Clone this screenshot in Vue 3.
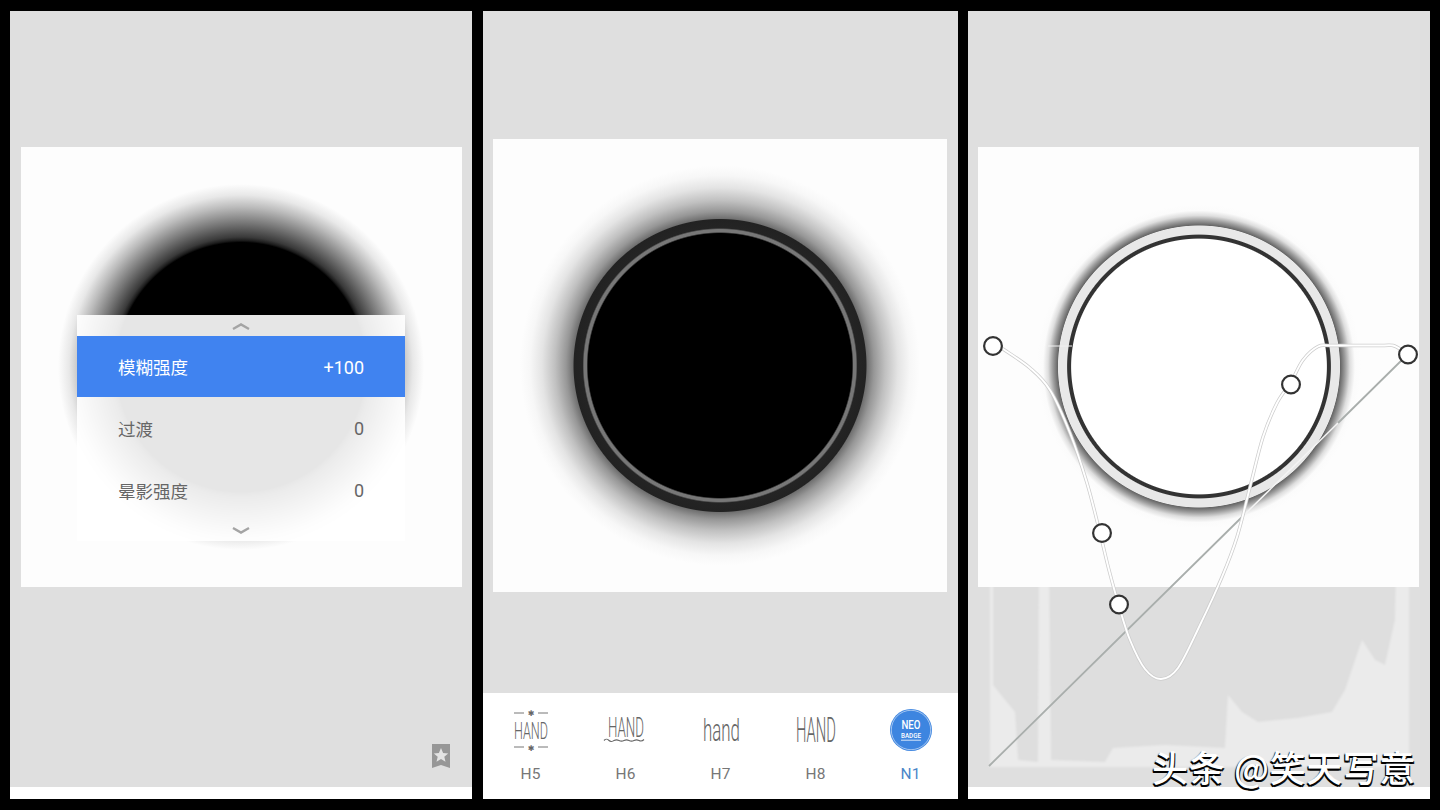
<script setup>
const rows = [
  { name: '模糊强度', value: '+100', active: true },
  { name: '过渡', value: '0' },
  { name: '晕影强度', value: '0' },
]
const nodes = [[993, 346], [1102, 533], [1119, 604.5], [1291, 384.5], [1408, 354.5]]
const pts = [[1003, 349], [1030, 368], [1050, 390], [1070, 433], [1087, 483], [1100, 533], [1109, 570], [1119, 606], [1130, 640], [1145, 669], [1161, 679], [1178, 668], [1200, 625], [1222, 577], [1237, 537], [1250, 487], [1263, 437], [1277, 403], [1291, 382], [1303, 360], [1318, 346.5], [1332, 345.5], [1380, 345.5], [1393, 345.5], [1403, 351]]
const curve = pts.reduce((d, p, i) => {
  if (i === 0) return `M${p[0]} ${p[1]}`
  const a = pts[i - 2] || pts[i - 1], b = pts[i - 1], c = pts[i + 1] || p
  const c1 = [b[0] + (p[0] - a[0]) / 6, b[1] + (p[1] - a[1]) / 6]
  const c2 = [p[0] - (c[0] - b[0]) / 6, p[1] - (c[1] - b[1]) / 6]
  return `${d} C${c1[0]} ${c1[1]} ${c2[0]} ${c2[1]} ${p[0]} ${p[1]}`
}, '')
</script>

<template>
  <div class="screen">
    <section class="panel">
      <div class="stage stage-left">
        <div class="photo photo-blur">
          <div class="menu">
            <div class="chev">
              <svg width="20" height="10" viewBox="0 0 20 10"><path d="M2 8 10 3.5 18 8" /></svg>
            </div>
            <div v-for="r in rows" :key="r.name" class="row" :class="{ active: r.active }">
              <span>{{ r.name }}</span><span class="num">{{ r.value }}</span>
            </div>
            <div class="chev chev-down">
              <svg width="20" height="10" viewBox="0 0 20 10"><path d="M2 2 10 6.5 18 2" /></svg>
            </div>
          </div>
        </div>
        <svg class="bookmark" width="18" height="24" viewBox="0 0 18 24">
          <path d="M0 0H18V24L9 21 0 24Z" fill="#979797" />
          <path d="M9 4 11.1 9 16.2 9.4 12.3 12.7 13.5 17.8 9 15.1 4.5 17.8 5.7 12.7 1.8 9.4 6.9 9Z" fill="#e4e4e4" />
        </svg>
      </div>
      <div class="foot"></div>
    </section>

    <section class="panel panel-mid">
      <div class="stage stage-mid">
        <div class="photo photo-ring"></div>
      </div>
      <div class="tabs">
        <div class="tab">
          <svg class="tab-icon" width="60" height="46" viewBox="0 0 60 46">
            <g stroke="#777" stroke-width="1"><path d="M13 6H23M37 6H47M13 40H23M37 40H47" /></g>
            <text x="30" y="9" class="star">✱</text>
            <text x="30" y="44" class="star">✱</text>
            <text x="13" y="32" class="hand" font-size="24" textLength="34" lengthAdjust="spacingAndGlyphs">HAND</text>
          </svg>
          <span>H5</span>
        </div>
        <div class="tab">
          <svg class="tab-icon" width="60" height="46" viewBox="0 0 60 46">
            <text x="12" y="30" class="hand" font-size="27" textLength="36" lengthAdjust="spacingAndGlyphs">HAND</text>
            <path d="M8 33.5c2-2 3-2 5 0s3 1 5 0 3-1 5 0 3 1 5 0 3-1 5 0 3 1 5 0 3-1 5 0 3 1 5-1" fill="none" stroke="#666" stroke-width="1.1" />
          </svg>
          <span>H6</span>
        </div>
        <div class="tab">
          <svg class="tab-icon" width="60" height="46" viewBox="0 0 60 46">
            <text x="12" y="34" class="hand hand-low" font-size="32" textLength="37" lengthAdjust="spacingAndGlyphs">hand</text>
          </svg>
          <span>H7</span>
        </div>
        <div class="tab">
          <svg class="tab-icon" width="60" height="46" viewBox="0 0 60 46">
            <text x="10" y="35" class="hand" font-size="35" textLength="40" lengthAdjust="spacingAndGlyphs">HAND</text>
          </svg>
          <span>H8</span>
        </div>
        <div class="tab tab-on">
          <svg class="tab-icon" width="60" height="46" viewBox="0 0 60 46">
            <circle cx="30" cy="23" r="21" fill="#3d85e0" />
            <circle cx="30" cy="23" r="19.7" fill="none" stroke="#cfe0f6" stroke-width=".7" />
            <text x="30" y="22" class="neo" textLength="19" lengthAdjust="spacingAndGlyphs">NEO</text>
            <text x="30" y="31" class="badge" textLength="20" lengthAdjust="spacingAndGlyphs">BADGE</text>
            <path d="M20 33.2H40" stroke="#fff" stroke-width=".8" />
          </svg>
          <span>N1</span>
        </div>
      </div>
    </section>

    <section class="panel">
      <div class="stage stage-right">
        <div class="photo photo-white"></div>
      </div>
      <div class="foot"></div>
      <svg class="overlay" width="462" height="788" viewBox="968 11 462 788">
        <defs>
          <filter id="soft" x="-5%" y="-5%" width="110%" height="110%"><feGaussianBlur stdDeviation="1" /></filter>
          <clipPath id="hist"><rect x="985" y="587" width="430" height="190" /></clipPath>
        </defs>
        <g clip-path="url(#hist)">
          <g filter="url(#soft)">
            <rect x="990" y="580" width="419" height="187" fill="#ebebeb" />
            <path d="M993 570H1039L1038 762 1018 760 1015 712 1005 700 993 685Z" fill="#dedede" />
            <path d="M1049 570H1396L1395 620 1385 665 1375 660 1362 640 1345 690 1332 712 1298 718 1258 722 1242 712 1228 695 1225 748 1165 745 1113 748 1105 762 1051 760Z" fill="#dedede" />
          </g>
        </g>
        <path d="M1408 354 1338 423M1243 516 989 766" stroke="#a9aeac" stroke-width="1.8" fill="none" />
        <path d="M1338 423 1243 516" stroke="#f4f4f4" stroke-width="1.5" fill="none" />
        <path d="M1048 346H1072" stroke="#f1f1f1" stroke-width="1" />
        <path :d="curve" fill="none" stroke="#cdcdcd" stroke-width="3.4" stroke-linecap="round" />
        <path :d="curve" fill="none" stroke="#fff" stroke-width="1.9" stroke-linecap="round" />
        <circle v-for="(n, i) in nodes" :key="i" :cx="n[0]" :cy="n[1]" r="8.9" fill="#fff" stroke="#333" stroke-width="2.2" />
      </svg>
      <div class="mark">头条 @笑天写意</div>
    </section>
  </div>
</template>

<style scoped>
.screen {
  display: flex;
  width: 1440px;
  height: 810px;
  box-sizing: border-box;
  padding: 11px 10px;
  background: #000;
  font-family: Roboto, "Noto Sans CJK SC", sans-serif;
  overflow: hidden;
}
.panel {
  position: relative;
  display: flex;
  flex-direction: column;
  width: 462px;
  background: #fff;
}
.panel-mid {
  width: 475px;
  margin: 0 10px 0 11px;
}
.stage {
  position: relative;
  flex: 1;
  box-sizing: border-box;
  padding: 136px 0 0 11px;
  background: #dfdfdf;
}
.stage-mid {
  padding: 128px 0 0 10px;
}
.stage-right {
  padding-left: 10px;
}
.foot {
  height: 12px;
  flex: none;
}
.photo {
  position: relative;
  width: 441px;
  height: 440px;
  background-color: #fdfdfd;
}
.photo-blur {
  background-image: radial-gradient(circle at 220px 220px,
    #000 0 124.5px, #1c1c1c 126.5px, #3a3a3a 130px, #777 144px, #bbb 160px, #e8e8e8 172px, #fdfdfd 183px);
}
.photo-ring {
  width: 454px;
  height: 453px;
  background-image: radial-gradient(circle at 227px 226.5px,
    #000 0 132px, #777 133.5px, #777 136px, #242424 137.5px, #222 146px, #707070 147px, #979797 154px, #c0c0c0 165px, #e4e4e4 178px, #f7f7f7 190px, #fdfdfd 200px);
}
.photo-white {
  background-image: radial-gradient(circle at 221px 219.5px,
    #fff 0 127.4px, #333 128.4px, #333 131.4px, #e8e8e8 132.4px, #e8e8e8 140.6px, #666 141.4px, #9c9c9c 146px, #dedede 151px, #fbfbfb 156px, #fdfdfd 162px);
}
.menu {
  position: absolute;
  top: 168px;
  left: 56px;
  display: flex;
  flex-direction: column;
  width: 328px;
  height: 226px;
  background: rgba(255, 255, 255, 0.9);
}
.chev {
  display: flex;
  align-items: center;
  justify-content: center;
  height: 21px;
}
.chev-down {
  height: 20px;
}
.chev path {
  fill: none;
  stroke: #a4a4a4;
  stroke-width: 2.4;
}
.row {
  display: flex;
  align-items: center;
  justify-content: space-between;
  height: 62px;
  flex: none;
  box-sizing: border-box;
  padding: 0 41px;
  font-size: 17.5px;
  color: #666;
}
.row.active {
  height: 61px;
  background: #4083f0;
  color: #fff;
}
.num {
  font-size: 18px;
  padding-top: 1px;
}
.bookmark {
  position: absolute;
  top: 733px;
  left: 422px;
}
.tabs {
  display: flex;
  height: 106px;
  flex: none;
  box-sizing: border-box;
  padding-top: 14px;
  justify-content: center;
}
.tab {
  display: flex;
  flex-direction: column;
  align-items: center;
  width: 95px;
  font-size: 15.5px;
  color: #777;
}
.tab-on {
  color: #4a86c8;
}
.tab-icon {
  margin-bottom: 12px;
  overflow: visible;
}
.hand {
  font-family: Roboto, sans-serif;
  font-weight: 300;
  fill: #666;
}
.hand-low {
  font-weight: 300;
}
.star {
  font-family: "DejaVu Sans", sans-serif;
  font-size: 8px;
  fill: #666;
  text-anchor: middle;
}
.neo {
  font-family: Roboto, sans-serif;
  font-size: 13px;
  font-weight: 500;
  fill: #fff;
  text-anchor: middle;
}
.badge {
  font-family: Roboto, sans-serif;
  font-size: 8px;
  font-weight: 500;
  fill: #fff;
  text-anchor: middle;
}
.overlay {
  position: absolute;
  top: 0;
  left: 0;
  pointer-events: none;
}
.mark {
  position: absolute;
  right: 14px;
  top: 733px;
  font-family: "Noto Sans CJK SC", sans-serif;
  font-size: 36px;
  font-weight: 500;
  letter-spacing: 0.6px;
  line-height: 44px;
  white-space: nowrap;
  color: #fff;
  text-shadow: -1px 2px 0 #000, 1px 2px 0 #111, -1px 1px 1px #333;
}
</style>
